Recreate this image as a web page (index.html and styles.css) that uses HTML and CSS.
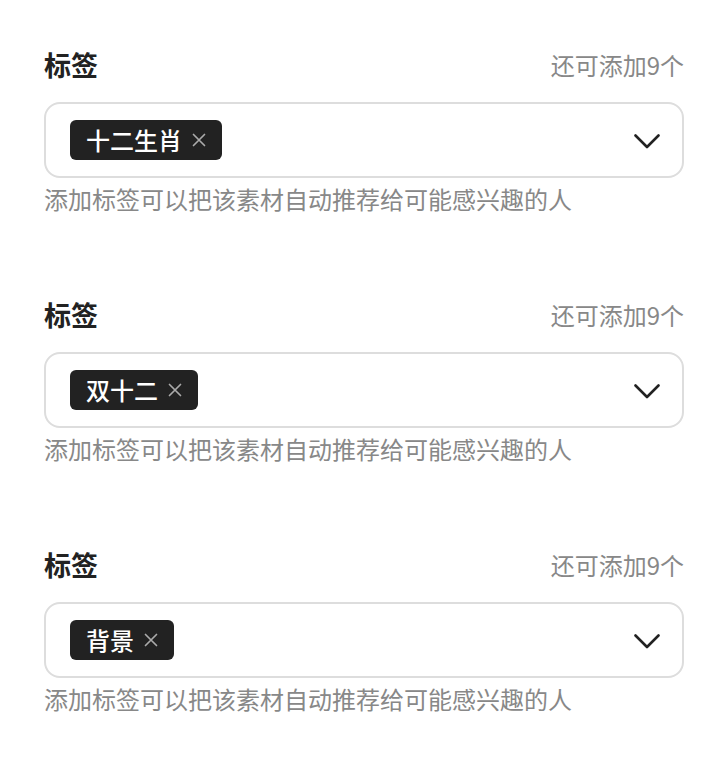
FILE: index.html
```html
<!DOCTYPE html>
<html lang="zh-CN">
<head>
<meta charset="utf-8">
<link rel="stylesheet" href="styles.css">
</head>
<body>
<div class="page">
  <section class="field">
    <div class="field-head">
      <span class="field-label">标签</span>
      <span class="field-count">还可添加9个</span>
    </div>
    <div class="select">
      <div class="tags">
        <span class="tag">十二生肖<svg class="tag-x" width="14" height="14" viewBox="0 0 14 14"><path d="M1.5 1.5 L12.5 12.5 M12.5 1.5 L1.5 12.5" stroke="#aaa" stroke-width="1.7" stroke-linecap="round"/></svg></span>
      </div>
      <svg class="chevron" width="26" height="15" viewBox="0 0 26 15"><path d="M1.5 1.5 L13 13 L24.5 1.5" fill="none" stroke="#222" stroke-width="2.6" stroke-linecap="round" stroke-linejoin="round"/></svg>
    </div>
    <div class="field-help">添加标签可以把该素材自动推荐给可能感兴趣的人</div>
  </section>
  <section class="field">
    <div class="field-head">
      <span class="field-label">标签</span>
      <span class="field-count">还可添加9个</span>
    </div>
    <div class="select">
      <div class="tags">
        <span class="tag">双十二<svg class="tag-x" width="14" height="14" viewBox="0 0 14 14"><path d="M1.5 1.5 L12.5 12.5 M12.5 1.5 L1.5 12.5" stroke="#aaa" stroke-width="1.7" stroke-linecap="round"/></svg></span>
      </div>
      <svg class="chevron" width="26" height="15" viewBox="0 0 26 15"><path d="M1.5 1.5 L13 13 L24.5 1.5" fill="none" stroke="#222" stroke-width="2.6" stroke-linecap="round" stroke-linejoin="round"/></svg>
    </div>
    <div class="field-help">添加标签可以把该素材自动推荐给可能感兴趣的人</div>
  </section>
  <section class="field">
    <div class="field-head">
      <span class="field-label">标签</span>
      <span class="field-count">还可添加9个</span>
    </div>
    <div class="select">
      <div class="tags">
        <span class="tag">背景<svg class="tag-x" width="14" height="14" viewBox="0 0 14 14"><path d="M1.5 1.5 L12.5 12.5 M12.5 1.5 L1.5 12.5" stroke="#aaa" stroke-width="1.7" stroke-linecap="round"/></svg></span>
      </div>
      <svg class="chevron" width="26" height="15" viewBox="0 0 26 15"><path d="M1.5 1.5 L13 13 L24.5 1.5" fill="none" stroke="#222" stroke-width="2.6" stroke-linecap="round" stroke-linejoin="round"/></svg>
    </div>
    <div class="field-help">添加标签可以把该素材自动推荐给可能感兴趣的人</div>
  </section>
</div>
</body>
</html>
```
FILE: styles.css
```css
html, body {
  margin: 0;
  padding: 0;
  background: #fff;
}
body {
  font-family: "Noto Sans CJK SC", "Noto Sans", sans-serif;
  color: #222;
}
.page {
  padding: 45px 44px 0;
}
.field {
  margin-bottom: 80px;
}
.field-head {
  display: flex;
  justify-content: space-between;
  align-items: center;
  height: 40px;
}
.field-label {
  font-size: 27px;
  font-weight: 700;
  line-height: 40px;
  color: #222;
}
.field-count {
  font-size: 24px;
  line-height: 40px;
  color: #888;
}
.select {
  margin-top: 17px;
  box-sizing: border-box;
  height: 76px;
  border: 2px solid #ddd;
  border-radius: 16px;
  padding: 0 22px 0 24px;
  display: flex;
  align-items: center;
  justify-content: space-between;
}
.tags {
  display: flex;
  gap: 8px;
}
.tag {
  display: inline-flex;
  align-items: center;
  height: 40px;
  box-sizing: border-box;
  padding: 0 16px;
  background: #222;
  color: #fff;
  border-radius: 6px;
  font-size: 24px;
  font-weight: 500;
  line-height: 40px;
}
.tag-x {
  display: block;
  margin-left: 10px;
}
.chevron {
  display: block;
  margin-top: 2px;
}
.field-help {
  margin-top: 5px;
  font-size: 24px;
  line-height: 32px;
  color: #888;
}
```
